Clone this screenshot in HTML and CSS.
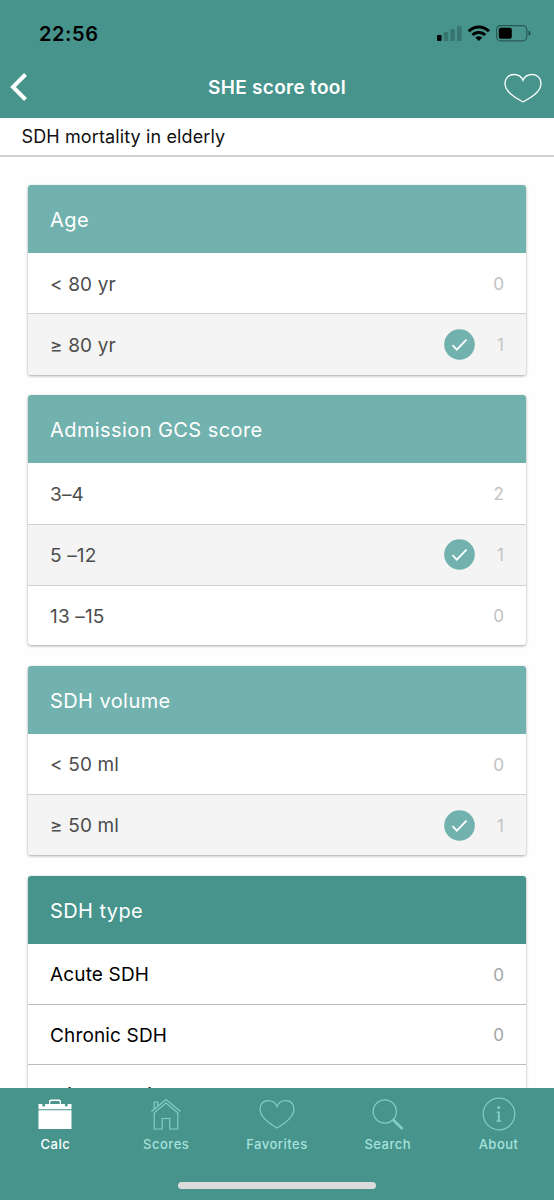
FILE: index.html
```html
<!DOCTYPE html>
<html lang="en">
<head>
<meta charset="utf-8">
<title>SHE score tool</title>
<link rel="stylesheet" href="styles.css">
</head>
<body>
<div class="screen">
  <header class="top">
    <div class="status">
      <span class="time">22:56</span>
      <svg class="status-icons" width="96" height="18" viewBox="0 0 96 18">
        <rect x="1" y="11" width="4.6" height="6" rx="1"/>
        <g opacity=".2">
          <rect x="7.7" y="8" width="4.6" height="9" rx="1"/>
          <rect x="14.3" y="5" width="4.6" height="12" rx="1"/>
          <rect x="21" y="2" width="4.6" height="15" rx="1"/>
        </g>
        <g fill="none" stroke="#000" stroke-width="2.9">
          <path d="M32.7 7.3a14 14 0 0 1 20.2 0"/>
          <path d="M36.4 11.1a9 9 0 0 1 12.8 0"/>
        </g>
        <path d="M39.3 13.6a5 5 0 0 1 7 0l-3.5 3.5z"/>
        <rect x="60.6" y="1.6" width="30.2" height="15.2" rx="4" fill="none" stroke="#000" stroke-opacity=".4" stroke-width="1.2"/>
        <rect x="62.8" y="3.7" width="13" height="11" rx="2"/>
        <path d="M92.5 6.600q2 .8 2 2.600t-2 2.600z" opacity=".5"/>
      </svg>
    </div>
    <div class="nav">
      <svg class="back" width="18" height="30" viewBox="0 0 18 30"><path d="M15.500 2.500 3 15l12.500 12.500" fill="none" stroke="#fff" stroke-width="4"/></svg>
      <h1 class="title">SHE score tool</h1>
      <svg class="fav" width="38" height="31" viewBox="0 0 38 31"><path d="M19 29C13 25.500 1 19.500 1 10.500 1 5.500 4.500 1.500 9.800 1.500c4 0 7.700 2 9.200 5.800 1.500-3.800 5.200-5.800 9.200-5.800C33.500 1.500 37 5.500 37 10.500c0 9-12 15-18 18.500z" fill="none" stroke="#fff" stroke-width="1.300"/></svg>
    </div>
  </header>
  <div class="subtitle"><span>SDH mortality in elderly</span></div>
  <main class="list">
    <section class="card done">
      <h2 class="head"><span>Age</span></h2>
      <div class="row"><span>&lt; 80 yr</span><span class="pts">0</span></div>
      <div class="row on"><span>≥ 80 yr</span><svg class="check" viewBox="0 0 31 31"><circle cx="15.500" cy="15.500" r="15.300"/><path d="m8.500 16.200 4.300 4.400 9.700-9.900"/></svg><span class="pts">1</span></div>
    </section>
    <section class="card done">
      <h2 class="head"><span>Admission GCS score</span></h2>
      <div class="row"><span>3–4</span><span class="pts">2</span></div>
      <div class="row on"><span>5 –12</span><svg class="check" viewBox="0 0 31 31"><circle cx="15.500" cy="15.500" r="15.300"/><path d="m8.500 16.200 4.300 4.400 9.700-9.900"/></svg><span class="pts">1</span></div>
      <div class="row"><span>13 –15</span><span class="pts">0</span></div>
    </section>
    <section class="card done">
      <h2 class="head"><span>SDH volume</span></h2>
      <div class="row"><span>&lt; 50 ml</span><span class="pts">0</span></div>
      <div class="row on"><span>≥ 50 ml</span><svg class="check" viewBox="0 0 31 31"><circle cx="15.500" cy="15.500" r="15.300"/><path d="m8.500 16.200 4.300 4.400 9.700-9.900"/></svg><span class="pts">1</span></div>
    </section>
    <section class="card">
      <h2 class="head"><span>SDH type</span></h2>
      <div class="row"><span>Acute SDH</span><span class="pts">0</span></div>
      <div class="row"><span>Chronic SDH</span><span class="pts">0</span></div>
      <div class="row tight"><span>Mixed-acuity SDH</span></div>
    </section>
  </main>
  <nav class="tabs">
    <div class="tab active">
      <svg width="36" height="36" viewBox="0 0 36 36"><path d="M1.500 8H12V5.500Q12 3.600 14 3.600h8q2 0 2 1.900V8h10.500v5.200h-33z" fill="#fff"/><path d="M13.300 8V6.300q0-1.400 1.400-1.400h6.600q1.400 0 1.400 1.400V8z" fill="#46948c"/><path d="M1.500 14.300h33V33h-33z" fill="#fff"/><circle cx="6.700" cy="9" r="1.500" fill="#46948c"/><circle cx="29.300" cy="9" r="1.500" fill="#46948c"/></svg>
      <span>Calc</span>
    </div>
    <div class="tab">
      <svg width="36" height="36" viewBox="0 0 36 36"><path d="m3.500 15.500 14.500-12 14.500 12M6.200 16.800V33h8V22.500h7.600V33h8V16.800L18 7zM6.200 13V6h3.600v4.200" fill="none" stroke="#83cec5" stroke-width="1.200"/></svg>
      <span>Scores</span>
    </div>
    <div class="tab">
      <svg width="36" height="36" viewBox="0 0 36 36"><path d="M18 32C12 28.500 1 22 1 13 1 8 4.300 4.700 9 4.700c4 0 7.500 2 9 5.800 1.500-3.800 5-5.800 9-5.800 4.700 0 8 3.300 8 8.300 0 9-11 15.500-17 19z" fill="none" stroke="#83cec5" stroke-width="1.200"/></svg>
      <span>Favorites</span>
    </div>
    <div class="tab">
      <svg width="36" height="36" viewBox="0 0 36 36" fill="none" stroke="#83cec5"><circle cx="14.800" cy="15.500" r="11.600" stroke-width="1.200"/><path d="m23 23.700 9.500 9.300" stroke-width="2.600"/></svg>
      <span>Search</span>
    </div>
    <div class="tab">
      <svg width="36" height="36" viewBox="0 0 36 36"><circle cx="18" cy="18" r="15.800" fill="none" stroke="#83cec5" stroke-width="1.200"/><circle cx="17.700" cy="11.500" r="1.500" fill="#83cec5"/><path d="M15.500 15.500h3.300v9h1.500v1.200h-4.900v-1.200h1.400v-7.700h-1.300z" fill="#83cec5"/></svg>
      <span>About</span>
    </div>
    <div class="home-bar"></div>
  </nav>
</div>
</body>
</html>
```
FILE: styles.css
```css
* { box-sizing: border-box; }
body { margin: 0; background: #fefefe; font-family: Inter, "Liberation Sans", sans-serif; }
.screen { width: 554px; height: 1200px; display: flex; flex-direction: column; overflow: hidden; }
.top { flex: none; height: 118px; background: #46948c; }
.status { height: 58px; display: flex; justify-content: space-between; padding: 24px 22px 0 39px; }
.time { font-size: 20px; line-height: 20px; font-weight: 600; letter-spacing: .6px; color: #000; }
.nav { height: 59px; display: grid; grid-template-columns: 60px 1fr 60px; align-items: center; }
.back { margin: -2px 0 0 10px; }
.title { margin: 0; text-align: center; color: #fff; font-size: 19px; font-weight: 600; letter-spacing: .3px; }
.fav { justify-self: end; margin: 2px 12px 0 0; }
.subtitle { flex: none; height: 39px; background: #fff; border-bottom: 2px solid #cfcfcf; padding-left: 21.500px; line-height: 38px; font-size: 18px; letter-spacing: .12px; color: #111; }
.list { flex: 1; min-height: 0; overflow: hidden; padding: 28px 28px 0; display: flex; flex-direction: column; gap: 20.300px; }
.card { flex: none; border-radius: 3px; background: #fff; box-shadow: 0 1px 3px rgba(0,0,0,.36); color: #000; }
.head { margin: 0; height: 68.200px; line-height: 71px; padding-left: 22px; border-radius: 3px 3px 0 0; background: #46948c; color: #fff; font-size: 20px; font-weight: 400; letter-spacing: .42px; }
.row { height: 60.200px; display: flex; align-items: center; padding: 2px 22px 0; font-size: 19px; letter-spacing: .15px; }
.row + .row { border-top: 1px solid #bdbdbd; padding-top: 1px; }
.done .head { background: #72b2ae; }
.done .row { color: #4d4d4d; }
.done .row + .row { border-top-color: #d0d0d0; }
.row.on { height: 61.500px; background: #f4f4f4; }
.row.on:last-child { border-radius: 0 0 3px 3px; }
.row.tight { align-items: flex-start; line-height: 60px; }
.pts { margin-left: auto; font-size: 17px; font-weight: 400; color: #a4a4a4; }
.done .pts { color: #c2c2c2; }
.check { width: 31px; height: 31px; margin: -1px 0 0 auto; }
.check circle { fill: #72b2ae; }
.check path { fill: none; stroke: #fff; stroke-width: 1.800; }
.on .pts { margin-left: 0; width: 29px; text-align: right; }
.tabs { flex: none; height: 112px; background: #46948c; display: grid; grid-template-columns: repeat(5, 110.800px); grid-template-rows: 94px 18px; }
.tab { display: flex; flex-direction: column; align-items: center; padding-top: 8px; color: #a6e2da; font-size: 13px; font-weight: 500; letter-spacing: .5px; }
.tab span { line-height: 16px; margin-top: 4px; }
.tab.active { color: #fff; }
.home-bar { grid-column: 1 / -1; justify-self: center; width: 198px; height: 7px; border-radius: 4px; background: #dcdcdc; }
```
